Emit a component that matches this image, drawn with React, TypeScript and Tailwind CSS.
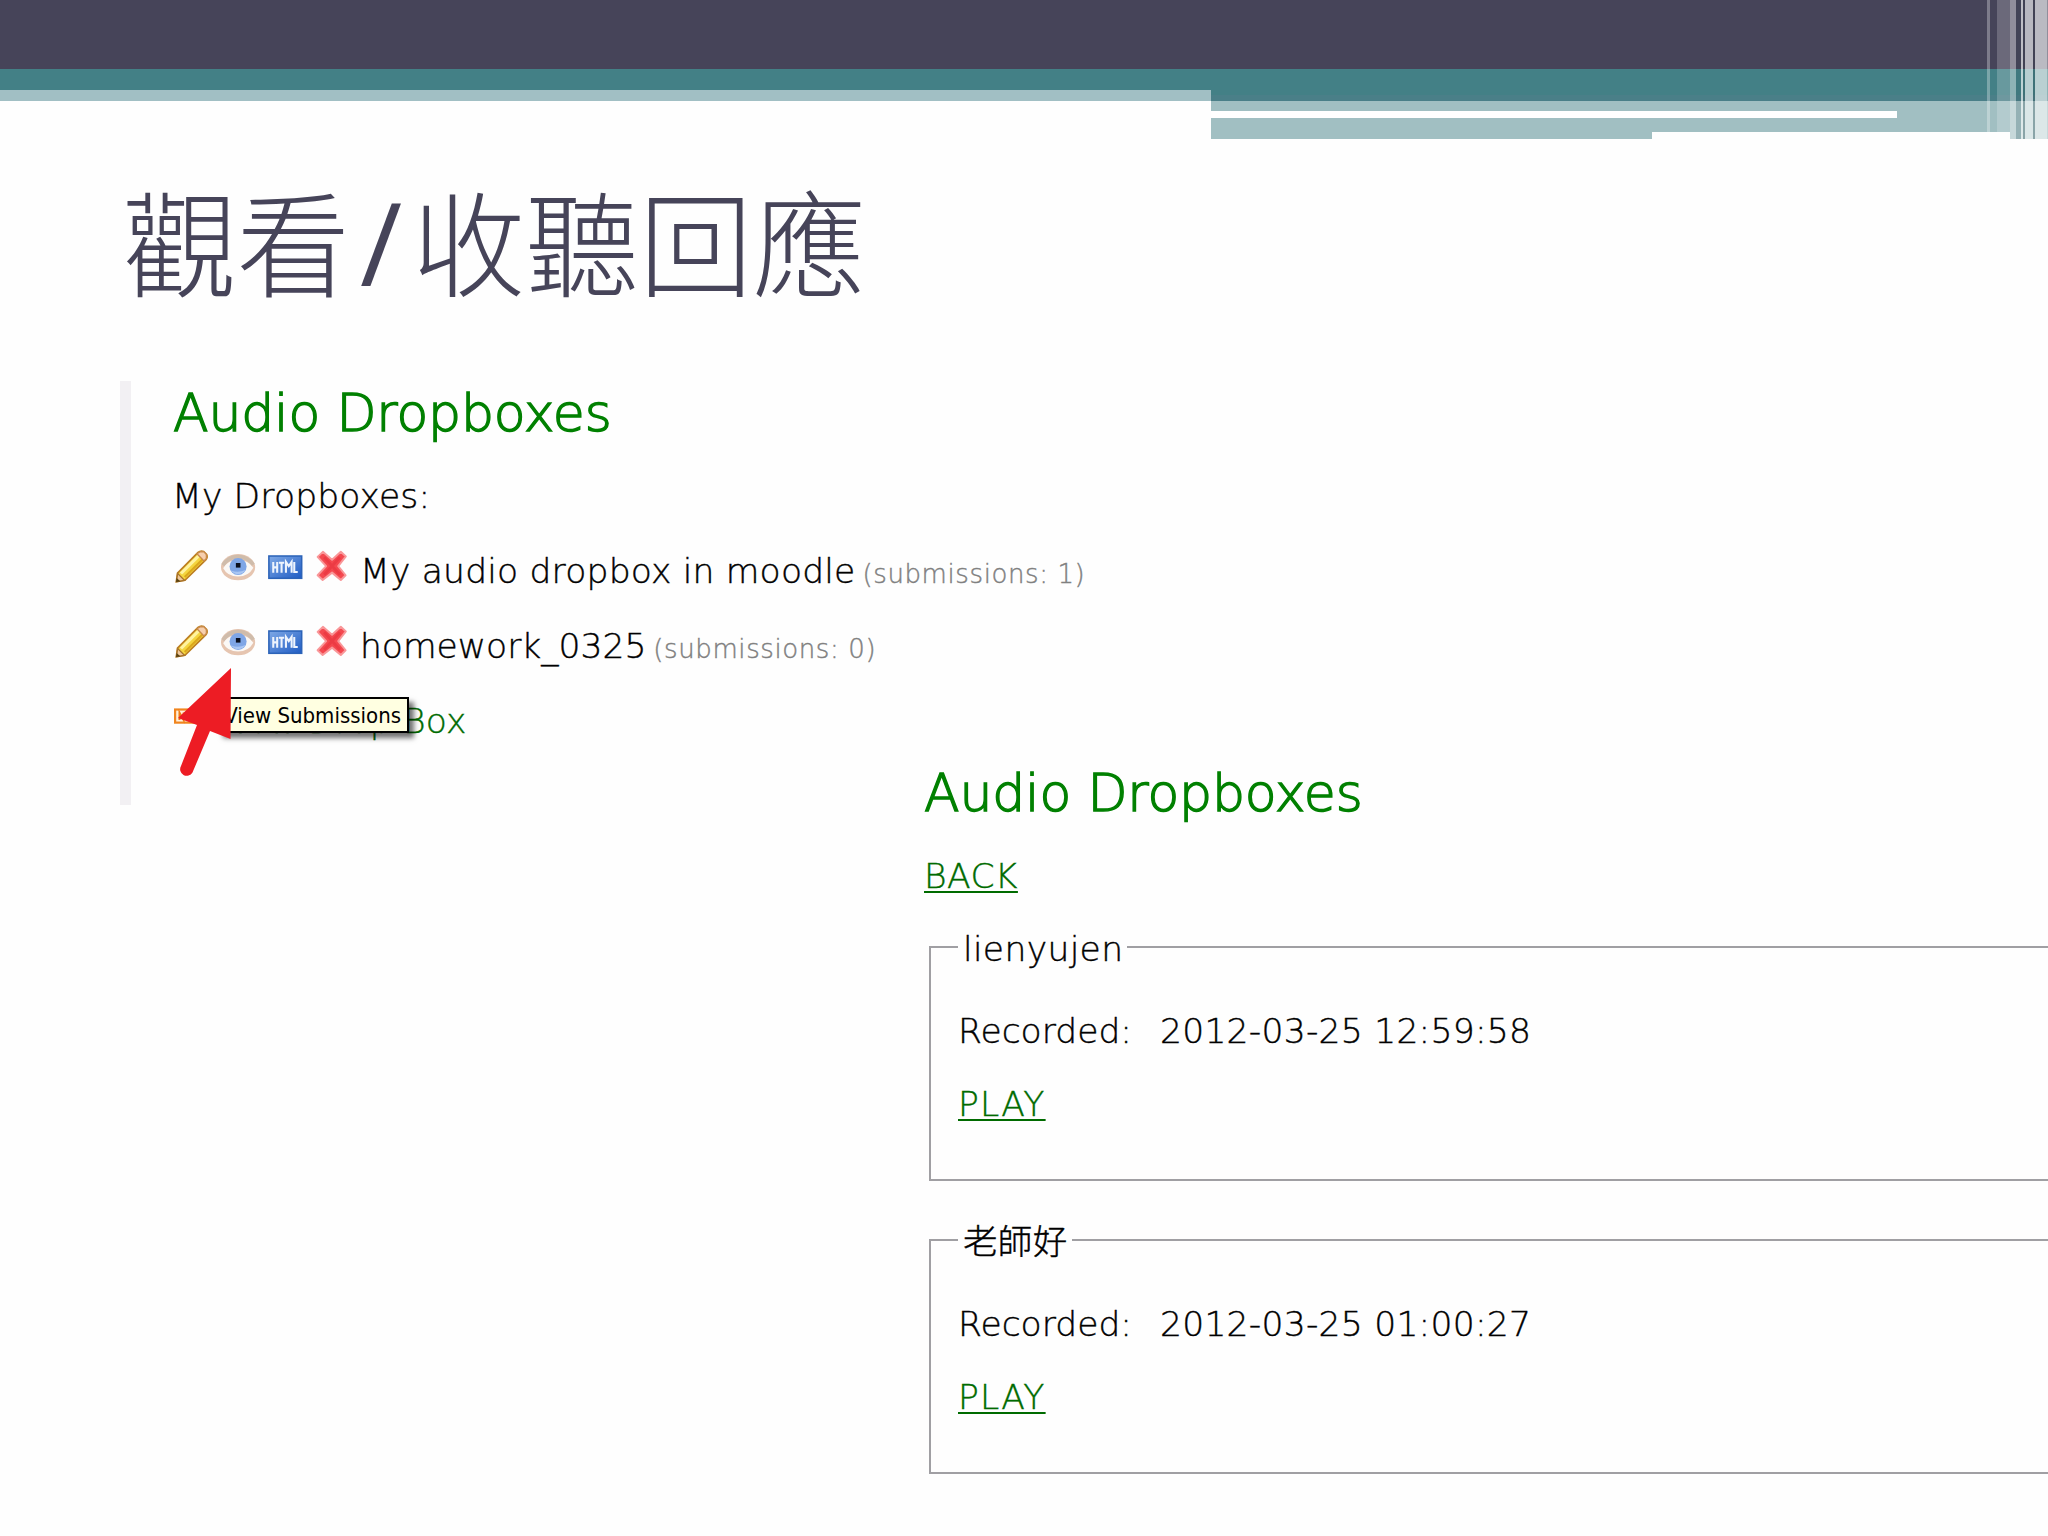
import React from 'react';

interface Dropbox {
  name: string;
  submissions: number;
  /** Letter spacing of the name. */
  tracking: string;
}

interface Recording {
  author: string;
  date: string;
}

const DROPBOXES: Dropbox[] = [
  { name: 'My audio dropbox in moodle', submissions: 1, tracking: 'tracking-[0.2px]' },
  { name: 'homework_0325', submissions: 0, tracking: 'tracking-normal' }
];

const RECORDINGS: Recording[] = [
  { author: 'lienyujen', date: '2012-03-25 12:59:58' },
  { author: '老師好', date: '2012-03-25 01:00:27' }
];

const PencilIcon: React.FC = () => (
  <svg viewBox="0 0 16 16" className="w-[35px] h-[35px] shrink-0">
    <path d="M1.1 14.9 1.6 11 11 1.6Q12.2.6 13.6 1.2L14.9 2.5Q15.5 3.9 14.5 5L5 14.3Z" fill="#f4d53f" stroke="#bd7f22" strokeWidth=".8" />
    <path d="M3.2 11.2 11.4 3" stroke="#fff3a0" strokeWidth="1.4" />
    <path d="M4.9 12.8 13 4.8" stroke="#dba71c" strokeWidth="1" />
    <path d="M10.5 2.2 12 1.2 13.7 1.3 14.8 2.6 14.8 4.3 13.7 5.5Z" fill="#f6cfae" stroke="#c98a4a" strokeWidth=".6" />
    <path d="M1.1 14.9 1.7 11.2 4.8 14.3Z" fill="#efc89a" stroke="#a8742c" strokeWidth=".6" />
    <path d="M.9 15.1 1.2 13.2 3 14.8Z" fill="#5b4312" />
  </svg>
);

const EyeIcon: React.FC = () => (
  <svg viewBox="0 0 16 16" className="w-[35px] h-[35px] shrink-0">
    <ellipse cx="7.8" cy="8.3" rx="7.8" ry="6" fill="#e6c5b0" />
    <path d="M1 8.8Q3 5 7.8 5T14.8 8.6Q12.6 12.6 7.8 12.6T1 8.8Z" fill="#fbf8f5" />
    <path d="M.8 7.4Q3.6 3.5 7.8 3.5T14.8 7.2" fill="none" stroke="#cfbcab" strokeWidth="1.7" />
    <circle cx="7.8" cy="8" r="3.9" fill="#7fa6e6" />
    <path d="M4.6 9.8a3.9 3.9 0 0 0 6.6-.2Q7.8 11 4.6 9.8Z" fill="#a9c6f3" />
    <rect x="6.8" y="6.4" width="2.1" height="2.1" fill="#0a0f1e" />
  </svg>
);

const HtmlIcon: React.FC = () => (
  <svg viewBox="0 0 16 16" className="w-[35px] h-[35px] shrink-0">
    <defs>
      <linearGradient id="html-fill" x1="0" y1="0" x2="1" y2="1">
        <stop offset="0" stopColor="#7fa9e6" />
        <stop offset="1" stopColor="#1f5cc4" />
      </linearGradient>
    </defs>
    <rect x=".4" y="3.2" width="15" height="10.2" fill="url(#html-fill)" stroke="#2c63b8" strokeWidth=".7" />
    <path
      d="M2.4 5.9V10.9M4.2 5.9V10.9M2.4 8.4H4.2M5 6.3H7.4M6.2 6.3V10.9M8.2 10.9V5.9L9.5 7.8 10.8 5.9V10.9M12 5.9V10.5H13.6"
      fill="none"
      stroke="#eef4fd"
      strokeWidth=".95"
    />
  </svg>
);

const DeleteIcon: React.FC = () => (
  <svg viewBox="0 0 16 16" className="w-[35px] h-[35px] shrink-0">
    <path
      d="M3.6 1.3 1.2 3.6 5.1 7.8 1.2 12 3.5 14.2 7.8 10.8 11.8 14.2 14 12 10.6 7.8 14.1 3.4 11.8 1.3 7.8 4.9Z"
      fill="#f4484f"
      stroke="#f99799"
      strokeWidth=".9"
      strokeLinejoin="round"
    />
    <path d="M4.2 3.8 11.4 11.8M11.4 3.8 4.2 11.8" stroke="#ec3b44" strokeWidth="1.3" />
  </svg>
);

const NewIcon: React.FC = () => (
  <svg viewBox="0 0 16 16" className="w-[35px] h-[35px] shrink-0">
    <rect x=".5" y="4.8" width="15" height="6" fill="#fff0dc" stroke="#f0851f" />
    <path d="M2.5 9.6V6.2L4.4 9.6V6.2M8 6.2H6V9.4H8M6 7.8H8M9.6 6 10.5 9.6 11.5 6.6 12.5 9.6 13.5 6" fill="none" stroke="#f07c14" strokeWidth=".9" />
  </svg>
);

const SlideHeader: React.FC = () => (
  <header className="relative h-[139px]">
    <div className="h-[69px] bg-[#464459]" />
    <div className="flex">
      <div className="w-[1211px]">
        <div className="h-[21px] bg-[#438086]" />
        <div className="h-[11px] bg-[#a1bfc4]" />
      </div>
      <div className="flex-1">
        <div className="h-[26px] bg-[#438086]" />
        <div className="h-[6px] bg-[#4a7f88]" />
        <div className="h-[10px] bg-[#a1bfc2]" />
        <div className="flex h-[7px] bg-[#a1bfc2]">
          <div className="w-[686px] bg-white" />
        </div>
        <div className="h-[14px] bg-[#a1bfc2]" />
        <div className="flex h-[7px]">
          <div className="w-[441px] bg-[#a1bfc2]" />
          <div className="w-[358px]" />
          <div className="flex-1 bg-[#a1bfc2]" />
        </div>
      </div>
    </div>
    {/* vertical light stripes over the bands */}
    <div className="absolute top-0 right-0 flex h-[139px] w-[61px]">
      <div className="h-[132px] w-[3px] bg-white/30" />
      <div className="w-[7px]" />
      <div className="h-[132px] w-[13px] bg-white/20" />
      <div className="w-[6px] bg-white/40" />
      <div className="w-[5px] bg-[#2b3a40]/10" />
      <div className="w-[2px] bg-white/65" />
      <div className="w-[2px] bg-[#2b3a40]/20" />
      <div className="w-[8px] bg-white/62" />
      <div className="w-[2px] bg-[#2b3a40]/20" />
      <div className="w-[12px] bg-white/63" />
      <div className="w-[1px] bg-white/40" />
    </div>
  </header>
);

const Heading: React.FC = () => (
  <h2 className="-ml-px h-[78px] text-[52px] leading-[64px] tracking-[-0.15px] text-[#008000] [-webkit-text-stroke:1.4px_#008000]">
    Audio Dropboxes
  </h2>
);

const DropboxRow: React.FC<Dropbox> = ({ name, submissions, tracking }) => (
  <li className="flex h-[75px] whitespace-nowrap leading-[75px]">
    <span className="flex gap-3 pt-[15px]">
      <PencilIcon />
      <EyeIcon />
      <HtmlIcon />
      <DeleteIcon />
    </span>
    <span className={`ml-[10px] ${tracking}`}>{name}</span>
    <span className="ml-[7px] pt-[3px] text-[26px] tracking-[0.6px] text-[#808080]">(submissions: {submissions})</span>
  </li>
);

const RecordingBox: React.FC<Recording> = ({ author, date }) => (
  <fieldset className="mb-[36.5px] ml-[4px] h-[256px] border-[2.5px] border-r-0 border-[#a09fa3] pl-[27px]">
    <legend className="h-[44px] pt-1 pr-[4px] pl-[5px] leading-[40px] tracking-[0.35px]">{author}</legend>
    <p className="mt-[26px] flex h-[73px] leading-[73px] whitespace-nowrap">
      <span className="w-[202px]">Recorded:</span>
      <span className="tracking-[0.25px]">{date}</span>
    </p>
    <p className="h-[73px] leading-[73px]">
      <a className="tracking-[1.2px] text-[#006b00] underline decoration-2 underline-offset-[3px]">PLAY</a>
    </p>
  </fieldset>
);

const PointerArrow: React.FC = () => (
  <svg viewBox="0 0 60 112" className="absolute left-[2px] -top-[19px] z-20 w-[60px] h-[112px]">
    <path d="M55 3 2 53 21 60 5 101A5.8 5.8 0 0 0 16.5 107.5L34 66 54.5 74Z" fill="#ed1c24" />
  </svg>
);

export default function App() {
  return (
    <main className="h-[1536px] w-[2048px] overflow-hidden bg-[#fefefe] font-['DejaVu_Sans','Noto_Sans_CJK_TC',sans-serif] text-[34.5px] font-extralight text-black [-webkit-text-stroke:0.4px]">
      <SlideHeader />
      <h1 className="flex h-[242px] items-start pt-[20px] pl-[123px] font-['Noto_Sans_CJK_TC',sans-serif] text-[113.5px] leading-[160px] font-light text-[#464459] [-webkit-text-stroke:0px]">
        觀看
        <span className="w-[62px] pt-[3px] text-center font-['Open_Sans',sans-serif] text-[115px] font-normal">/</span>
        收聽回應
      </h1>

      <div className="flex pl-[120px]">
        <section className="h-[424px] w-[805px] border-l-[11px] border-[#f2f0f3] pl-[43px]">
          <Heading />
          <p className="-ml-[2px] h-[75px] leading-[75px] tracking-[0.15px]">My Dropboxes:</p>
          <ul>
            {DROPBOXES.map((box) => (
              <DropboxRow key={box.name} {...box} />
            ))}
          </ul>
          <div className="relative flex h-[75px] leading-[75px] whitespace-nowrap text-[#006b00]">
            <span className="pt-[15px]">
              <NewIcon />
            </span>
            <a className="ml-[12px] tracking-[0.2px]">New Drop Box</a>
            <div className="absolute top-[13px] left-[44px] z-10 flex h-[36px] w-[191px] items-center justify-end border-2 border-black bg-[#ffffe1] pt-[2px] pr-[6px] font-['DejaVu_Sans_Condensed','DejaVu_Sans',sans-serif] text-[22px] leading-none font-normal text-black shadow-[5px_5px_5px_rgba(0,0,0,0.55)] [-webkit-text-stroke:0px]">
              View Submissions
            </div>
            <PointerArrow />
          </div>
        </section>

        <section className="mt-[380px] flex-1">
          <Heading />
          <p className="-ml-px h-[86px] leading-[75px]">
            <a className="tracking-[0.4px] text-[#006b00] underline decoration-2 underline-offset-[3px]">BACK</a>
          </p>
          {RECORDINGS.map((rec) => (
            <RecordingBox key={rec.date} {...rec} />
          ))}
        </section>
      </div>
    </main>
  );
}
